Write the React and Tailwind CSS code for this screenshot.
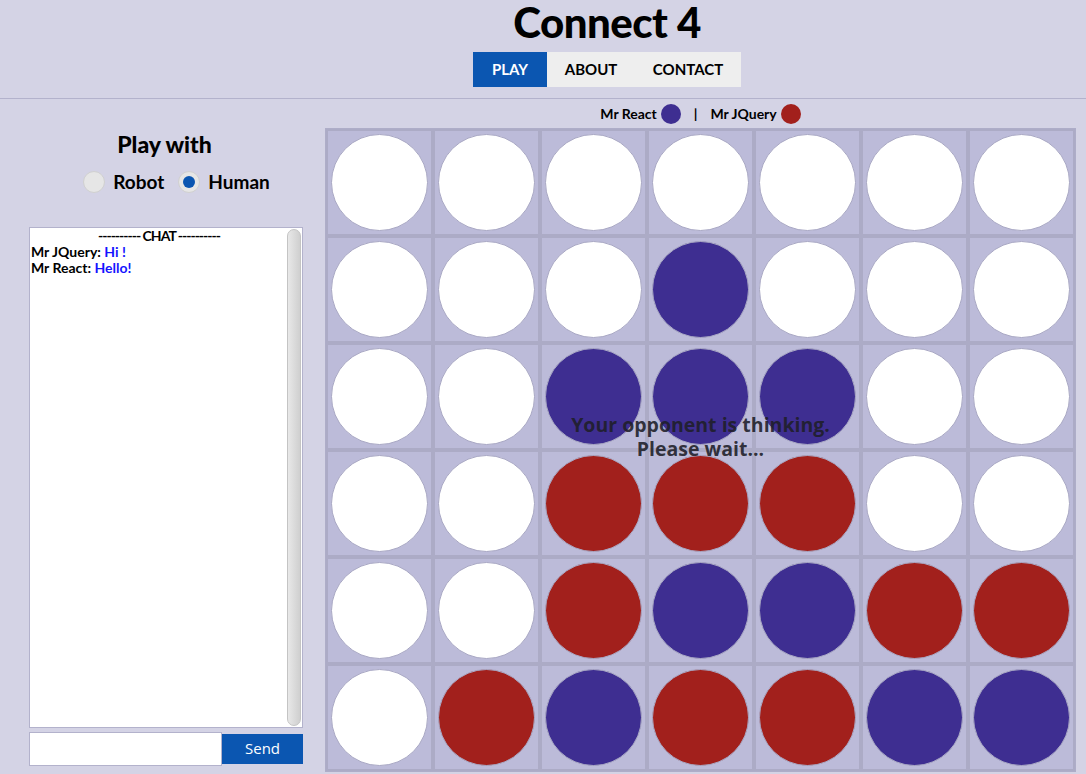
import React, { useState } from 'react';

const W = 0, P = 1, R = 2;
const board = [
  [W, W, W, W, W, W, W],
  [W, W, W, P, W, W, W],
  [W, W, P, P, P, W, W],
  [W, W, R, R, R, W, W],
  [W, W, R, P, P, R, R],
  [W, R, P, R, R, P, P],
];

const discClass = {
  [W]: 'bg-white',
  [P]: 'bg-[#3e2e91]',
  [R]: 'bg-[#a2201c]',
};

export default function App() {
  const [mode, setMode] = useState('human');
  const [msg, setMsg] = useState('');

  return (
    <div className="min-h-[774px] bg-[#d4d3e5] text-black" style={{ fontFamily: 'Lato, "Noto Sans", sans-serif' }}>
      {/* Header */}
      <div className="flex flex-col items-center border-b border-[#b3b2cc] h-[99px] pl-[128px]">
        <h1 className="text-[42px] font-black leading-[44px] tracking-[-0.5px]">Connect 4</h1>
        <div className="flex mt-[8px] h-[35px] bg-[#eeeeee] text-[15px] font-bold">
          <button className="w-[74px] bg-[#0b56b1] text-white">PLAY</button>
          <button className="w-[88px]">ABOUT</button>
          <button className="w-[106px]">CONTACT</button>
        </div>
      </div>

      <div className="flex">
        {/* Left panel */}
        <div className="w-[325px] shrink-0 flex flex-col items-center">
          <div className="text-[23px] font-black mt-[30px] leading-[30px] ml-[4px]">Play with</div>
          <div className="flex items-center gap-[14px] mt-[9px] text-[19px] font-bold ml-[28px]">
            <label className="flex items-center gap-[8px] cursor-pointer" onClick={() => setMode('robot')}>
              <span className="w-[22px] h-[22px] rounded-full bg-[#e6e6e6] border border-[#d0d0d0] flex items-center justify-center">
                {mode === 'robot' && <span className="w-[12px] h-[12px] rounded-full bg-[#0b56b1]" />}
              </span>
              Robot
            </label>
            <label className="flex items-center gap-[8px] cursor-pointer" onClick={() => setMode('human')}>
              <span className="w-[22px] h-[22px] rounded-full bg-[#e6e6e6] border border-[#d0d0d0] flex items-center justify-center">
                {mode === 'human' && <span className="w-[12px] h-[12px] rounded-full bg-[#0b56b1]" />}
              </span>
              Human
            </label>
          </div>

          {/* Chat */}
          <div className="self-start ml-[29px] mt-[30px] w-[274px] h-[501px] bg-white border border-[#b3b2cc] flex">
            <div className="flex-1 text-[14px] font-bold leading-[16px] pl-[1px]">
              <div className="text-center tracking-[-1px]">---------- CHAT ----------</div>
              <div>Mr JQuery: <span className="text-[#1414ff]">Hi !</span></div>
              <div>Mr React: <span className="text-[#1414ff]">Hello!</span></div>
            </div>
            <div className="w-[14px] mr-[1px] mt-[1px] mb-[1px] rounded-full bg-gradient-to-r from-[#e8e8e8] to-[#cfcfcf] border border-[#c4c4c4]" />
          </div>
          <div className="self-start ml-[29px] mt-[4px] flex items-center">
            <input
              value={msg}
              onChange={(e) => setMsg(e.target.value)}
              className="w-[193px] h-[34px] bg-white border border-[#b3b2cc] outline-none px-1"
            />
            <button className="w-[81px] h-[30px] bg-[#0b56b1] text-white text-[15px]" style={{ fontFamily: '"Open Sans", sans-serif' }}>Send</button>
          </div>
        </div>

        {/* Board side */}
        <div className="flex flex-col">
          <div className="flex items-center justify-center h-[29px] text-[14px] font-bold gap-[4px]">
            <span>Mr React</span>
            <span className="w-[20px] h-[20px] rounded-full bg-[#3e2e91]" />
            <span className="mx-[9px]">|</span>
            <span>Mr JQuery</span>
            <span className="w-[20px] h-[20px] rounded-full bg-[#a2201c]" />
          </div>
          <div className="relative border border-[#aeadc8] w-[751px]">
            {board.map((row, r) => (
              <div key={r} className="flex">
                {row.map((c, i) => (
                  <div key={i} className="w-[107px] h-[107px] bg-[#bcbbd9] border-2 border-[#acabc6] flex items-center justify-center">
                    <div className={`w-[97px] h-[97px] rounded-full border border-[#a9a8c4] ${discClass[c]}`} />
                  </div>
                ))}
              </div>
            ))}
            <div
              className="absolute left-0 right-0 top-[284px] text-center text-[19.5px] font-bold leading-[24px] text-[#1e1e28]/90"
              style={{ fontFamily: '"Open Sans", sans-serif' }}
            >
              Your opponent is thinking.<br />Please wait...
            </div>
          </div>
        </div>
      </div>
    </div>
  );
}
